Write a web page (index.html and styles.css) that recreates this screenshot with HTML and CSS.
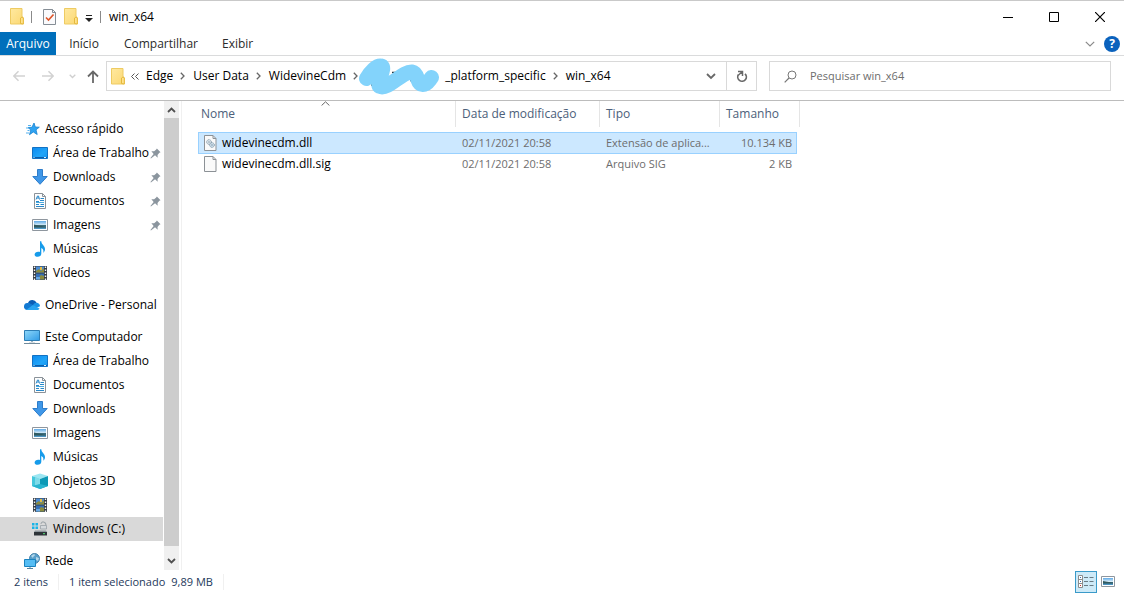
FILE: index.html
```html
<!DOCTYPE html>
<html lang="pt-BR">
<head>
<meta charset="utf-8">
<title>win_x64</title>
<link rel="stylesheet" href="styles.css">
</head>
<body>
<svg class="defs" aria-hidden="true">
  <defs>
    <linearGradient id="g-desk" x1="0" y1="0" x2="1" y2="1"><stop offset="0" stop-color="#0d8af0"/><stop offset=".6" stop-color="#21a5f8"/><stop offset="1" stop-color="#1494f0"/></linearGradient>
    <linearGradient id="g-pc" x1="0" y1="0" x2="1" y2="1"><stop offset="0" stop-color="#8fd8fa"/><stop offset="1" stop-color="#2f9be6"/></linearGradient>
    <linearGradient id="g-sky" x1="0" y1="0" x2="0" y2="1"><stop offset="0" stop-color="#5fa9e6"/><stop offset=".5" stop-color="#d7ecf8"/><stop offset=".55" stop-color="#3d6b78"/><stop offset="1" stop-color="#4f9cd0"/></linearGradient>
    <linearGradient id="g-folder" x1="0" y1="0" x2="1" y2="1"><stop offset="0" stop-color="#ffe9a0"/><stop offset="1" stop-color="#fbd873"/></linearGradient>
    <symbol id="folder" viewBox="0 0 14 17"><path d="M.5.5h11.500v8l1.300 1v6.500H.5z" fill="url(#g-folder)" stroke="#eecb62"/><path d="M10.500 15.500v-5.500l1.500-1 1.300 1v6z" fill="#ffe38c" stroke="#e5b93e"/></symbol>
    <symbol id="star" viewBox="0 0 16 16"><path d="M10 2l1.300 4 4 .2-3.300 2.600 1.200 4.700-3.900-2.500-3.800 2.700 1.300-4.800-2.800-2.400 3.900-.2z" fill="#2ea3f2" stroke="#1681cf" stroke-width=".8"/><path d="M4 4.500h3M2 7h3M3.500 9.500h2M2 12h3" stroke="#55b1ee"/></symbol>
    <symbol id="desktop" viewBox="0 0 16 16"><path d="M.5 2.500h15v11H.5z" fill="url(#g-desk)" stroke="#1272c4"/><path d="M1 12.500h14" stroke="#0c5da8"/><path d="M1.500 12.500h1M12 12.500h2" stroke="#d5efff"/></symbol>
    <symbol id="download" viewBox="0 0 16 16"><path d="M5.500.5h5v7h4.700L8 15.300.8 7.500h4.700z" fill="#3f97e8" stroke="#2e7dca"/></symbol>
    <symbol id="document" viewBox="0 0 16 16"><path d="M2.500.5h8l3 3v12h-11z" fill="#fdfdfd" stroke="#8b9299"/><path d="M10.500.5v3h3" fill="none" stroke="#8b9299"/><path d="M4 6.500l1.500-3.500h1l1 3.500M5 5h2M8.500 5.500H12M8 7.500h4M4 8.500h3M4 11.500h3M8.500 11.500H12M4 13.500h8" fill="none" stroke="#2988c9"/><path d="M4 9.500h8" stroke="#4baade"/></symbol>
    <symbol id="picture" viewBox="0 0 16 16"><path d="M.5 2.500h15v11H.5z" fill="#fff" stroke="#8e969e"/><path d="M2 4h12v8H2z" fill="url(#g-sky)"/><path d="M2 7.500l4 1 8 1.200v.8H2z" fill="#315a60"/></symbol>
    <symbol id="music" viewBox="0 0 16 16"><path d="M8 .3h1.300c.2 3.400 3.500 4.300 3.700 7.600.1 1.800-.8 3-1.700 3.800.5-2.800-.5-4-2-4.700v5.800c0 1.800-1.700 3-3.500 3-2 0-3.200-1-3.200-2.400 0-1.700 2-2.900 4-2.700.5 0 1 .2 1.400.4z" fill="#169bea"/></symbol>
    <symbol id="video" viewBox="0 0 16 16"><path d="M1 1h14v14H1z" fill="#353c45"/><path d="M4 1.500h8v6H4z" fill="#4c8cd4"/><path d="M4 8.500h8v6H4z" fill="#336fb9"/><path d="M4 6l3-2 2 2 3-3v4.500H4zM6 13l3-3 3 1v3.500H6z" fill="#8a8b3f"/><path d="M8 2h2v3H8z" fill="#e1bb48"/><path d="M4 12h4v2.500H4z" fill="#68a9e5"/><path d="M2.500 1.500v14M13.500 1.500v14" stroke="#f6f6f6" stroke-width="1.400" stroke-dasharray="1.500 1.500"/></symbol>
    <symbol id="cloud" viewBox="0 0 16 16"><path d="M4 6a4.600 4.600 0 0 1 8.500-.4l-3 4z" fill="#0b5db5"/><path d="M3 13a3.500 3.500 0 0 1 1-7c2 0 3 1 5 2l-3 5z" fill="#1279d2"/><path d="M9 8c1-2 2.500-2.600 4-2.300 1.900.5 3 1.800 3 3.600L12 11z" fill="#1b93e6"/><path d="M2 13l7-5 6.500 3.500c-.5 1-1.400 1.500-2.500 1.500z" fill="#2aa5f0"/></symbol>
    <symbol id="pc" viewBox="0 0 16 16"><path d="M.5 1.500h15v10H.5z" fill="url(#g-pc)" stroke="#2d7eb5"/><path d="M7 12h2v1H7z" fill="#9bb3c2"/><path d="M0 14.500h16" stroke="#718b9c"/><path d="M5 13.500h6" stroke="#d6dde2"/></symbol>
    <symbol id="cube" viewBox="0 0 16 16"><path d="M0 3l8-2.500L16 3 8 6z" fill="#9ce6f2"/><path d="M0 3l8 3v10l-8-3z" fill="#45c8dc"/><path d="M16 3L8 6v10l8-3z" fill="#0c99b6"/><path d="M3 4l5 2v5l-5 2z" fill="#7edbe9"/><path d="M8 11l8 2-8 3-8-3z" fill="#29b4cf"/></symbol>
    <symbol id="drive" viewBox="0 0 16 16"><path d="M0 2h2.500v2.500H0zM3.500 2H6v2.500H3.500zM0 5.500h2.500V8H0zM3.500 5.500H6V8H3.500z" fill="#1ab4e8"/><path d="M2 11h13v3.500H2z" fill="#2d3338"/><path d="M2 11l1-1.500h11l1 1.500z" fill="#8d969c"/><path d="M11 12.700h2" stroke="#5be47a"/><path d="M8.500 4.500h6v3.500h-6z" fill="#d5d9dc" stroke="#9aa2a7" stroke-width=".8"/><path d="M9 3c0-3 5-3 5 1.500" fill="none" stroke="#a0a8ac" stroke-width="1.100"/></symbol>
    <symbol id="network" viewBox="0 0 16 16"><circle cx="10.500" cy="5.500" r="5" fill="#5b9fc9" stroke="#4684ad"/><path d="M7 3c2-2 4-2 4-1s-2 1-2 3M12 4l3 1-1 3-2-1z" fill="#b4d8eb"/><path d="M.5 6.500h11v7H.5z" fill="#55bdf4" stroke="#1b83bf"/><path d="M3 15.500h6M6 14v1" stroke="#56849e"/></symbol>
    <symbol id="pin" viewBox="0 0 12 12"><path d="M7.500.5L11.500 4.500l-1.300.8-2 2.200.2 3L5.500 8 1 11.500l-.5-.5L4 6.500 1.500 3.600l3-.1 2.300-1.800z" fill="#8b959e"/></symbol>
    <symbol id="page" viewBox="0 0 13 16"><path d="M.5.5h8.500l3 3v12H.5z" fill="#fafafa" stroke="#8c9196"/><path d="M9 .5v3h3" fill="none" stroke="#8c9196"/></symbol>
  </defs>
</svg>
<div class="window">
  <header class="titlebar">
    <svg class="fold" width="14" height="17"><use href="#folder"/></svg>
    <span class="bar"></span>
    <button class="plain props" aria-label="Propriedades"><svg width="13" height="16" viewBox="0 0 13 16"><path d="M.5.5h9l3 3v12H.5z" fill="#fafafc" stroke="#858d95"/><path d="M9.500.5v3h3" fill="none" stroke="#858d95"/><path d="M3 8.500l2.500 2.500 5-5.500" fill="none" stroke="#dd5429" stroke-width="1.600"/></svg></button>
    <button class="plain newfold" aria-label="Nova pasta"><svg width="14" height="17"><use href="#folder"/></svg></button>
    <button class="plain qat" aria-label="Personalizar"><svg width="8" height="7" viewBox="0 0 8 7"><path d="M1 .5h6" stroke="#222"/><path d="M0 3h8L4 7z" fill="#222"/></svg></button>
    <span class="bar"></span>
    <h1>win_x64</h1>
    <div class="controls">
      <button class="plain" aria-label="Minimizar"><svg width="10" height="10" viewBox="0 0 10 10"><path d="M0 5.500h10" stroke="#000"/></svg></button>
      <button class="plain" aria-label="Maximizar"><svg width="10" height="10" viewBox="0 0 10 10"><path d="M.5.5h9v9h-9z" fill="none" stroke="#000"/></svg></button>
      <button class="plain" aria-label="Fechar"><svg width="10" height="10" viewBox="0 0 10 10"><path d="M0 0l10 10M10 0L0 10" stroke="#000" stroke-width="1.200"/></svg></button>
    </div>
  </header>
  <nav class="ribbon">
    <button class="tab file">Arquivo</button>
    <button class="tab inicio">Início</button>
    <button class="tab share">Compartilhar</button>
    <button class="tab">Exibir</button>
    <div class="ribbon-end">
      <button class="plain" aria-label="Expandir"><svg width="10" height="6" viewBox="0 0 10 6"><path d="M.8.8L5 5 9.200.8" fill="none" stroke="#8a8a8a" stroke-width="1.200"/></svg></button>
      <button class="help" aria-label="Ajuda">?</button>
    </div>
  </nav>
  <div class="navrow">
    <div class="navbuttons">
      <button class="plain" aria-label="Voltar"><svg width="12" height="12" viewBox="0 0 12 12"><path d="M12 6H1M5.500 1.300L.8 6l4.700 4.700" fill="none" stroke="#d2d2d2" stroke-width="1.500"/></svg></button>
      <button class="plain" aria-label="Avançar"><svg width="12" height="12" viewBox="0 0 12 12"><path d="M0 6h11M6.500 1.300L11.200 6l-4.700 4.700" fill="none" stroke="#d2d2d2" stroke-width="1.500"/></svg></button>
      <button class="plain" aria-label="Recentes"><svg width="7" height="5" viewBox="0 0 7 5"><path d="M.7.7l2.800 2.800L6.300.7" fill="none" stroke="#cfcfcf" stroke-width="1.300"/></svg></button>
      <button class="plain" aria-label="Acima"><svg width="12" height="13" viewBox="0 0 12 13"><path d="M6 13V1.500M1 6.500l5-5 5 5" fill="none" stroke="#686868" stroke-width="1.800"/></svg></button>
    </div>
    <div class="address">
      <svg class="fold" width="14" height="17"><use href="#folder"/></svg>
      <svg class="dbl" width="8" height="7" viewBox="0 0 8 7"><path d="M3.500.5l-3 3 3 3M7.500.5l-3 3 3 3" fill="none" stroke="#555"/></svg>
      <button class="crumb">Edge</button><svg class="chev" width="5" height="8" viewBox="0 0 5 8"><path d="M.8.8L4 4 .8 7.200" fill="none" stroke="#666" stroke-width="1.300"/></svg>
      <button class="crumb">User Data</button><svg class="chev" width="5" height="8" viewBox="0 0 5 8"><path d="M.8.8L4 4 .8 7.200" fill="none" stroke="#666" stroke-width="1.300"/></svg>
      <button class="crumb c-wide">WidevineCdm</button><svg class="chev" width="5" height="8" viewBox="0 0 5 8"><path d="M.8.8L4 4 .8 7.200" fill="none" stroke="#666" stroke-width="1.300"/></svg>
      <svg class="scribble" width="82" height="38" viewBox="0 0 82 38"><path d="M13 28h3M34 15.500h4M52 23.500h3" stroke="#26343c" stroke-width="1.500"/><path d="M8.500 21.500C12 15 19 8 23 9c6 1-6 18-1 20.500C30 33 45 14 54 15c7 1 4 13 11 12.500 4 0 6-4 8.500-7" fill="none" stroke="#83d3fb" stroke-width="15" stroke-linecap="round" stroke-linejoin="round"/></svg>
      <button class="crumb">_platform_specific</button><svg class="chev" width="5" height="8" viewBox="0 0 5 8"><path d="M.8.8L4 4 .8 7.200" fill="none" stroke="#666" stroke-width="1.300"/></svg>
      <button class="crumb">win_x64</button>
      <button class="plain drop" aria-label="Locais anteriores"><svg width="10" height="7" viewBox="0 0 10 7"><path d="M1 1l4 4 4-4" fill="none" stroke="#686868" stroke-width="1.800"/></svg></button>
      <button class="plain refresh" aria-label="Atualizar"><svg width="12" height="13" viewBox="0 0 12 13"><path d="M2.500 4.500A4.300 4.300 0 1 0 9 3.800" fill="none" stroke="#686868" stroke-width="1.700"/><path d="M2 1.500h4.500v4.500M6.300 1.700L2.500 5" fill="none" stroke="#686868" stroke-width="1.500"/></svg></button>
    </div>
    <label class="search"><svg width="13" height="13" viewBox="0 0 13 13"><circle cx="8" cy="5" r="4" fill="none" stroke="#777"/><path d="M5 8L.7 12.300" stroke="#777" stroke-width="1.200"/></svg><input type="search" placeholder="Pesquisar win_x64" aria-label="Pesquisar win_x64"></label>
  </div>
  <main>
    <nav class="tree">
      <ul>
        <li><a class="root" href="#"><svg><use href="#star"/></svg>Acesso rápido</a></li>
        <li><a href="#"><svg><use href="#desktop"/></svg>Área de Trabalho<svg class="pin"><use href="#pin"/></svg></a></li>
        <li><a href="#"><svg><use href="#download"/></svg>Downloads<svg class="pin"><use href="#pin"/></svg></a></li>
        <li><a href="#"><svg><use href="#document"/></svg>Documentos<svg class="pin"><use href="#pin"/></svg></a></li>
        <li><a href="#"><svg><use href="#picture"/></svg>Imagens<svg class="pin"><use href="#pin"/></svg></a></li>
        <li><a href="#"><svg><use href="#music"/></svg>Músicas</a></li>
        <li><a href="#"><svg><use href="#video"/></svg>Vídeos</a></li>
      </ul>
      <ul>
        <li><a class="root" href="#"><svg><use href="#cloud"/></svg>OneDrive - Personal</a></li>
      </ul>
      <ul>
        <li><a class="root" href="#"><svg><use href="#pc"/></svg>Este Computador</a></li>
        <li><a href="#"><svg><use href="#desktop"/></svg>Área de Trabalho</a></li>
        <li><a href="#"><svg><use href="#document"/></svg>Documentos</a></li>
        <li><a href="#"><svg><use href="#download"/></svg>Downloads</a></li>
        <li><a href="#"><svg><use href="#picture"/></svg>Imagens</a></li>
        <li><a href="#"><svg><use href="#music"/></svg>Músicas</a></li>
        <li><a href="#"><svg><use href="#cube"/></svg>Objetos 3D</a></li>
        <li><a href="#"><svg><use href="#video"/></svg>Vídeos</a></li>
        <li><a class="current" href="#"><svg><use href="#drive"/></svg>Windows (C:)</a></li>
      </ul>
      <ul>
        <li><a class="root" href="#"><svg><use href="#network"/></svg>Rede</a></li>
      </ul>
    </nav>
    <div class="scrollbar">
      <button class="plain" aria-label="Rolar para cima"><svg width="9" height="6" viewBox="0 0 9 6"><path d="M1 5l3.500-3.500L8 5" fill="none" stroke="#505050" stroke-width="1.800"/></svg></button>
      <div class="thumb"></div>
      <button class="plain" aria-label="Rolar para baixo"><svg width="9" height="6" viewBox="0 0 9 6"><path d="M1 1l3.500 3.500L8 1" fill="none" stroke="#505050" stroke-width="1.800"/></svg></button>
    </div>
    <section class="files">
      <table>
        <colgroup><col class="w-name"><col class="w-date"><col class="w-type"><col class="w-size"><col class="w-edge"></colgroup>
        <thead>
          <tr><th>Nome<svg class="sort" width="9" height="5" viewBox="0 0 9 5"><path d="M.6 4.500l3.900-3.700 3.900 3.700" fill="none" stroke="#666"/></svg></th><th>Data de modificação</th><th>Tipo</th><th colspan="2">Tamanho</th></tr>
        </thead>
        <tbody>
          <tr class="selected"><td class="name"><span><svg width="13" height="16" viewBox="0 0 13 16"><use href="#page"/><circle cx="5" cy="7" r="2.300" fill="#e5edf2" stroke="#7f95a5" stroke-dasharray="1.200 .5"/><circle cx="5" cy="7" r=".8" fill="#7f95a5"/><circle cx="8" cy="10" r="2.300" fill="#dbe8f0" stroke="#7290a6" stroke-dasharray="1.200 .5"/><circle cx="8" cy="10" r=".8" fill="#7290a6"/></svg>widevinecdm.dll</span></td><td>02/11/2021 20:58</td><td>Extensão de aplica...</td><td class="size">10.134 KB</td></tr>
          <tr><td class="name"><span><svg width="13" height="16" viewBox="0 0 13 16"><use href="#page"/></svg>widevinecdm.dll.sig</span></td><td>02/11/2021 20:58</td><td>Arquivo SIG</td><td class="size">2 KB</td></tr>
        </tbody>
      </table>
    </section>
  </main>
  <footer>
    <span class="count">2 itens</span>
    <span class="picked"><span>1 item selecionado</span><span>9,89 MB</span></span>
    <div class="views">
      <button class="view on" aria-label="Detalhes"><svg width="18" height="16" viewBox="0 0 18 16"><path d="M1.500 1.500h4v12h-4zM1.500 5.500h4M1.500 9.500h4" fill="#fff" stroke="#8c8c8c"/><path d="M3 3.500h1M3 7.500h1" stroke="#376fae"/><path d="M3 11.500h1" stroke="#c33"/><path d="M7 3.500h4M12.500 3.500h4M7 7.500h4M12.500 7.500h4M7 11.500h4M12.500 11.500h4" stroke="#697b84"/></svg></button>
      <button class="view" aria-label="Miniaturas"><svg width="14" height="12" viewBox="0 0 14 12"><path d="M.5.5h13v10H.5z" fill="#fff" stroke="#8e969e"/><path d="M2 2h10v7H2z" fill="url(#g-sky)"/><path d="M2 5l4 .8 6 .8v.8H2z" fill="#315a60"/></svg></button>
    </div>
  </footer>
</div>
</body>
</html>
```

FILE: styles.css
```css
* { box-sizing: border-box; }
html, body { height: 100%; }
body {
  margin: 0;
  background: #fff;
  color: #000;
  font: 12px/16px "Open Sans", "Noto Sans", sans-serif;
}
button, input { font: inherit; color: inherit; border: 0; background: none; padding: 0; margin: 0; }
svg { display: block; flex: none; }
ul { list-style: none; margin: 0; padding: 0; }
a { color: inherit; text-decoration: none; }
.defs { position: absolute; width: 0; height: 0; }
.plain { display: flex; align-items: center; justify-content: center; }

.window { display: flex; flex-direction: column; height: 100vh; border-top: 1px solid #c9c9c9; overflow: hidden; }

.titlebar { display: flex; align-items: center; height: 31px; flex: none; padding: 0 1px 0 10px; }
.bar { width: 1px; height: 12px; background: #8a8a8a; margin-left: 7px; }
.props { margin-left: 11px; }
.newfold { margin-left: 8px; }
.qat { margin: 4px 0 0 7px; }
.titlebar h1 { margin: 0 0 0 8px; font-size: 12px; font-weight: 400; }
.controls { display: flex; margin-left: auto; align-self: stretch; }
.controls button { width: 46px; }

.ribbon { display: flex; height: 24px; flex: none; border-bottom: 1px solid #dadbdc; color: #2b2b2b; }
.tab { padding: 0 12px; }
.file { width: 56px; padding: 0; background: #006fbb; color: #fff; }
.inicio { width: 56px; padding: 0; }
.share { width: 98px; padding: 0; }
.ribbon-end { display: flex; align-items: center; gap: 9px; margin-left: auto; padding-right: 4px; }
.help { width: 16px; height: 16px; border-radius: 8px; background: #0b62bd; color: #fff; font-weight: 700; line-height: 16px; text-align: center; }

.navrow { display: flex; align-items: center; height: 45px; flex: none; border-bottom: 1px solid #bcbcbc; padding: 0 13px 4px; }
.navbuttons { display: flex; align-items: center; gap: 17px; width: 93px; }
.navbuttons button:nth-child(3) { margin-left: -2px; }
.navbuttons button:nth-child(4) { margin-left: -6px; }
.address { display: flex; align-items: center; flex: 1 1 651px; height: 30px; border: 1px solid #d9d9d9; padding-left: 4px; }
.dbl { margin: 0 7px 0 6px; }
.crumb { white-space: nowrap; }
.chev { margin: 0 8px 0 7px; }
.c-wide + .chev { margin-right: 0; }
.scribble { margin-right: 5px; }
.drop { width: 30px; margin-left: auto; }
.refresh { width: 30px; height: 28px; border-left: 1px solid #d9d9d9; }
.search { display: flex; align-items: center; flex: 1 1 342px; height: 30px; margin-left: 12px; border: 1px solid #d9d9d9; padding-left: 14px; gap: 13px; }
.search input { flex: 1; min-width: 0; outline: 0; appearance: none; font-size: 11px; }
.search input::placeholder { color: #6d6d6d; opacity: 1; }

main { display: flex; flex: 1; min-height: 0; }
.tree { width: 163px; flex: none; padding-top: 16px; overflow: hidden; }
.tree ul { margin-bottom: 8px; }
.tree a { display: flex; align-items: center; height: 24px; padding-left: 32px; white-space: nowrap; }
.tree a.root { padding-left: 24px; }
.tree svg { width: 16px; height: 16px; margin-right: 5px; }
.tree .pin { width: 11px; height: 11px; margin: 0 2px 0 auto; }
.tree .current { background: #d9d9d9; }
.scrollbar { display: flex; flex-direction: column; width: 15px; margin-left: 1px; flex: none; background: #f0f0f0; }
.scrollbar button { height: 17px; }
.scrollbar button:last-child { height: 24px; padding-top: 6px; }
.thumb { flex: 1; background: #cdcdcd; }
.files { flex: 1; min-width: 0; margin-left: 2px; border-left: 1px solid #f0f0f0; padding-left: 16px; }

table { table-layout: fixed; width: 602px; border-collapse: separate; border-spacing: 0; }
.w-name { width: 258px; }
.w-date { width: 144px; }
.w-type { width: 120px; }
.w-size { width: 77px; }
.w-edge { width: 3px; }
th { position: relative; height: 26px; padding: 0 0 0 6px; border-right: 1px solid #e5e5e5; color: #4c607a; font-weight: 400; text-align: left; white-space: nowrap; }
th:first-child { padding-left: 3px; }
.sort { position: absolute; top: 0; left: 123px; }
tbody::before { content: ""; display: block; height: 5px; }
td { height: 20px; padding: 0 6px; color: #6d6d6d; font-size: 11px; white-space: nowrap; border: solid transparent; border-width: 1px 0; }
.name { padding-left: 5px; color: #000; font-size: 12px; border-left-width: 1px; }
.name span { display: flex; align-items: center; gap: 5px; }
.size { padding: 0 4px 0 0; text-align: right; border-right-width: 1px; }
.selected td { height: 22px; background: #cce8ff; border-color: #99d1ff; }

footer { display: flex; align-items: center; height: 24px; flex: none; padding: 0 5px 0 14px; color: #1e395b; font-size: 11px; }
.count, .picked { border-right: 1px solid #f0f0f0; padding-right: 10px; }
.picked { display: flex; gap: 6px; margin-left: 10px; }
.views { display: flex; margin-left: auto; }
.view { display: flex; align-items: center; justify-content: center; width: 22px; height: 22px; }
.view.on { background: #cdeaf8; border: 1px solid #3a9ac9; }
```
